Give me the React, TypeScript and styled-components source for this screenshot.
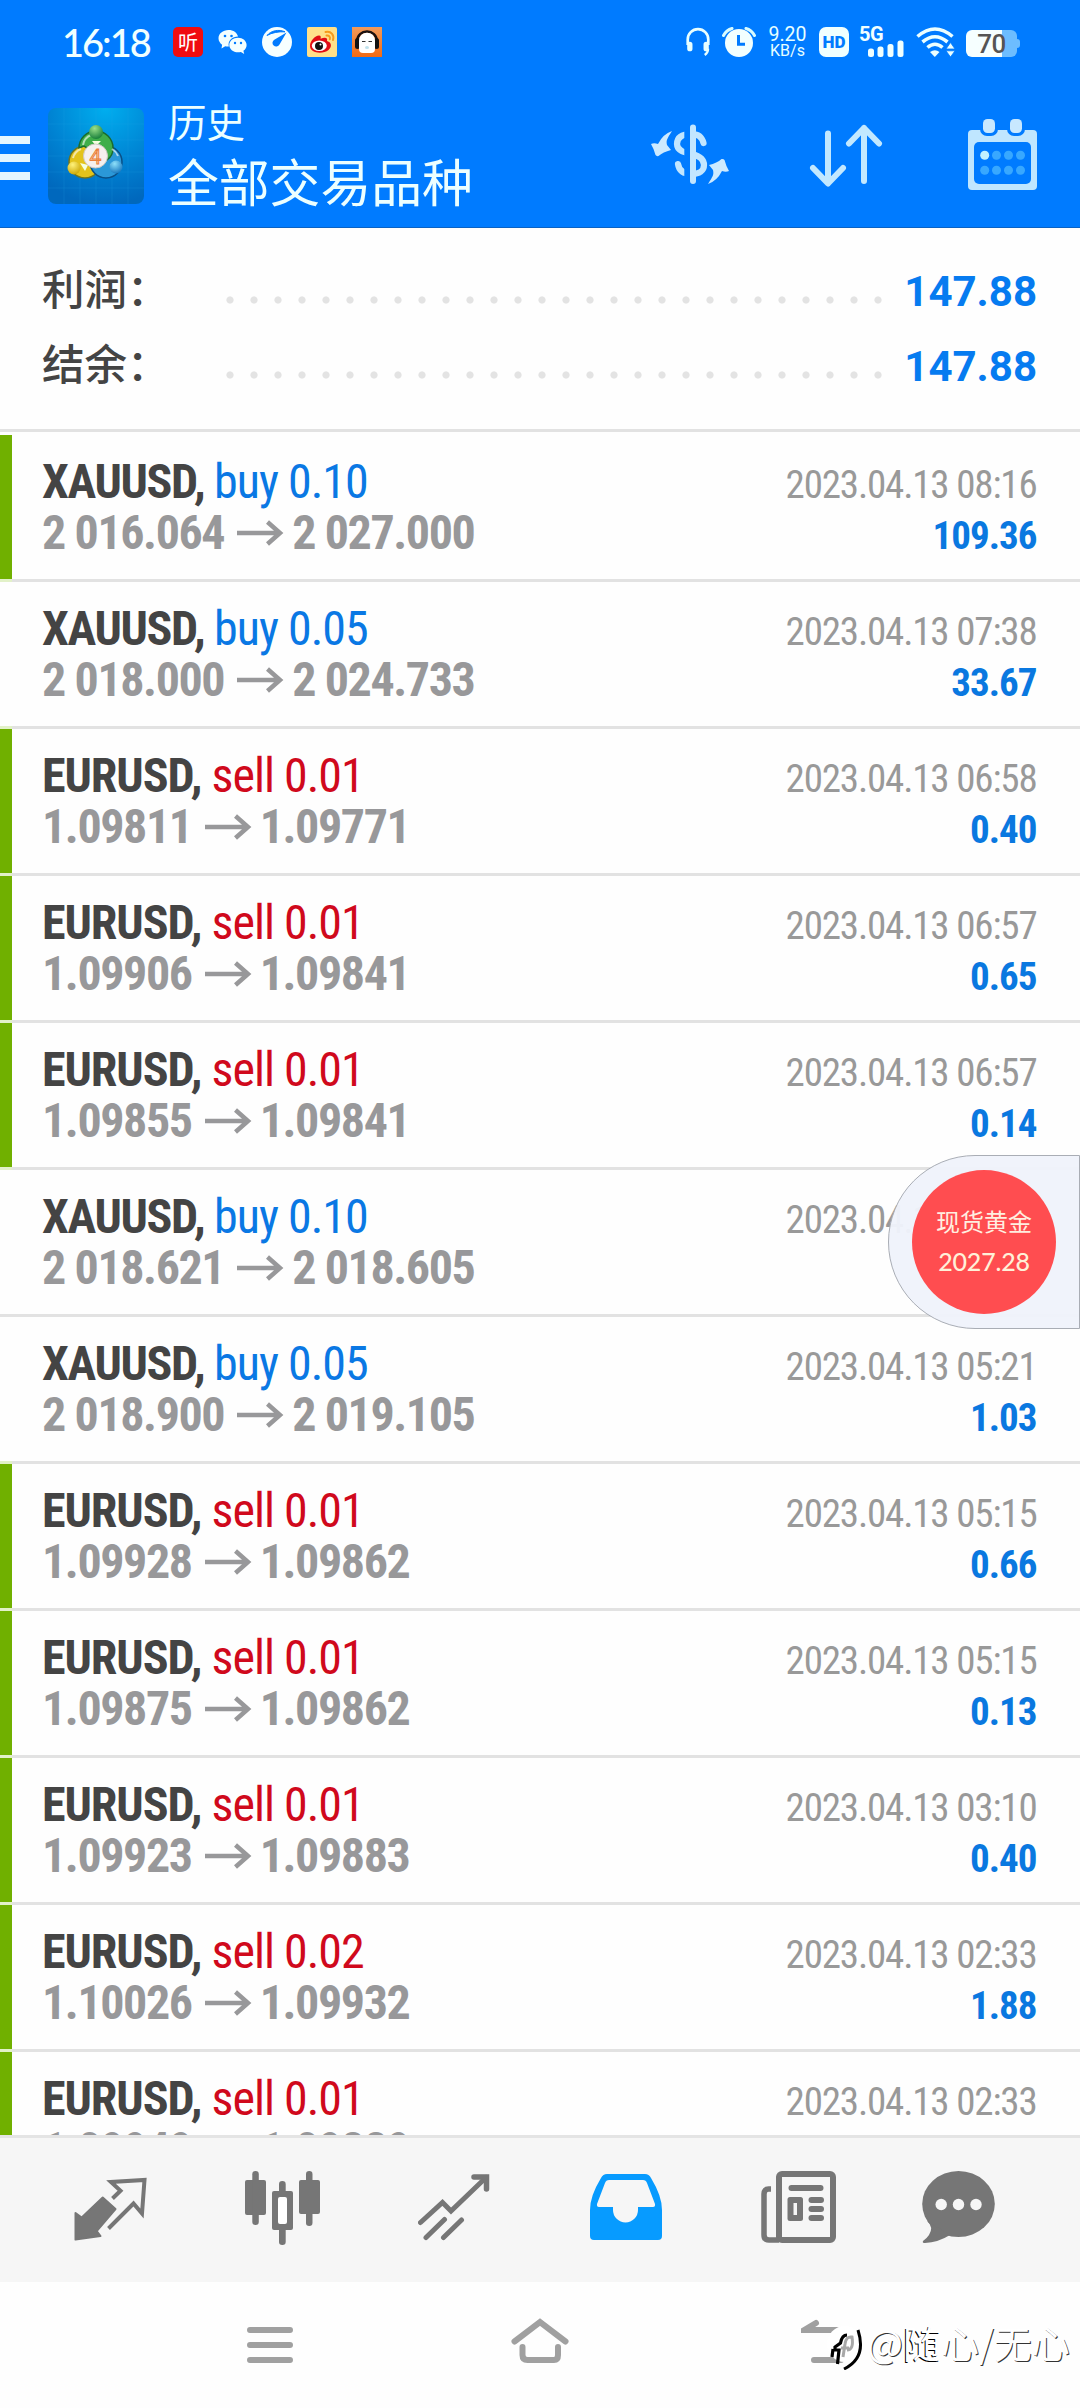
import React from "react";
import styled, { createGlobalStyle } from "styled-components";

const CONDENSED = `"Roboto Condensed", Roboto, "Liberation Sans Narrow", sans-serif`;
const CJK = `"Noto Sans CJK SC", "Noto Sans", sans-serif`;

const GlobalStyle = createGlobalStyle`
  html, body { margin: 0; padding: 0; background: #fff; }
  * { box-sizing: border-box; }
  svg { display: block; flex: none; }
`;

const Screen = styled.div`
  position: relative;
  width: 1080px;
  height: 2408px;
  display: flex;
  flex-direction: column;
  background: #fefefe;
  overflow: hidden;
`;

/* ---------- header ---------- */
const Header = styled.header`
  height: 228px;
  flex: none;
  background: #007bff;
  border-bottom: 1px solid #0a62c4;
`;

const StatusBar = styled.div`
  height: 84px;
  display: flex;
  justify-content: space-between;
  padding: 27px 63px 0 62px;
`;

const StatusGroup = styled.div<{ $gap: number }>`
  display: flex;
  align-items: flex-start;
  height: 30px;
  gap: ${(p) => p.$gap}px;
`;

const Clock = styled.div`
  width: 96px;
  font: 500 38px/31px Lato, sans-serif;
  letter-spacing: -2px;
  color: #f0ffff;
  white-space: nowrap;
`;

const ListenBadge = styled.div`
  width: 30px;
  height: 30px;
  border-radius: 5px;
  background: #f00c10;
  color: #fff;
  font: 400 20px/29px ${CJK};
  text-align: center;
`;

const NetSpeed = styled.div`
  display: flex;
  flex-direction: column;
  align-items: center;
  width: 39px;
  color: #e6ffff;
  font: 400 19.5px/15px Roboto, sans-serif;
  white-space: nowrap;
  span + span { font-size: 16px; line-height: 17px; }
`;

const HdBadge = styled.div`
  width: 30px;
  height: 30px;
  margin-right: -2px;
  border-radius: 7px;
  background: #f0ffff;
  color: #007bff;
  font: 900 17px/30px Roboto, sans-serif;
  text-align: center;
`;

const Signal = styled.div`
  position: relative;
  width: 45px;
  height: 30px;
  color: #f0ffff;
  font: 700 20px/15px Roboto, sans-serif;
  letter-spacing: -0.5px;
  svg { position: absolute; right: 0; bottom: 0; }
`;

const Battery = styled.div`
  position: relative;
  width: 51px;
  height: 27px;
  margin: 3px 0 0 -2px;
  border-radius: 6px;
  background: linear-gradient(to right, #f6ffff 36px, #6dbdff 36px);
  color: #555;
  font: 500 26px/28px Roboto, sans-serif;
  letter-spacing: -0.6px;
  text-align: center;
  &::after {
    content: "";
    position: absolute;
    right: -3px;
    top: 9px;
    width: 3px;
    height: 9px;
    border-radius: 0 3px 3px 0;
    background: #6dbdff;
  }
`;

const AppBar = styled.div`
  height: 143px;
  display: flex;
  align-items: flex-start;
`;

const Hamburger = styled.div`
  width: 30px;
  margin-top: 52px;
  display: flex;
  flex-direction: column;
  gap: 10px;
  span { height: 8px; background: #e4f6ff; }
`;

const Logo = styled.div`
  width: 96px;
  height: 96px;
  margin: 24px 0 0 18px;
  border-radius: 8px;
  overflow: hidden;
`;

const Titles = styled.div`
  flex: 1;
  margin: 11px 0 0 24px;
  color: #ecffff;
  font-family: ${CJK};
  font-weight: 400;
  white-space: nowrap;
`;
const SubTitle = styled.div`
  font-size: 38.5px;
  line-height: 50px;
`;
const MainTitle = styled.div`
  font-size: 50.8px;
  line-height: 60px;
  margin-top: 5px;
`;

const Actions = styled.div`
  display: flex;
  align-items: flex-start;
  padding: 35px 43px 0 0;
`;
const Action = styled.div<{ $top: number; $left: number }>`
  margin: ${(p) => p.$top}px 0 0 ${(p) => p.$left}px;
`;

/* ---------- summary ---------- */
const Summary = styled.section`
  height: 201px;
  flex: none;
  padding: 25px 43px 0 42px;
`;
const SummaryRow = styled.div`
  display: flex;
  height: 75px;
  align-items: center;
`;
const SummaryLabel = styled.div`
  width: 184px;
  color: #444;
  font: 500 42.5px/68px ${CJK};
  padding-bottom: 7px;
  white-space: nowrap;
`;
const Dots = styled.div`
  width: 672px;
  height: 8px;
  margin-top: 18px;
  background: radial-gradient(circle at 4px 4px, #e3e3e3 3.2px, transparent 4px) 0 0 / 24px 8px;
`;
const SummaryValue = styled.div`
  flex: 1;
  text-align: right;
  color: #067bf0;
  font: 700 42px/60px Roboto, sans-serif;
  padding-top: 2px;
`;

/* ---------- deals ---------- */
const DealList = styled.main`
  height: 1706px;
  flex: none;
  overflow: hidden;
  font-family: ${CONDENSED};
  font-stretch: 75%;
`;
const Separator = styled.div<{ $tinted?: boolean }>`
  height: 3px;
  background: linear-gradient(to right, ${(p) => (p.$tinted ? "#e2f1c8" : "#e2e2e2")} 12px, #e2e2e2 12px);
`;
const FirstGap = styled.div`
  height: 3px;
`;
const Deal = styled.div<{ $marked: boolean }>`
  height: 144px;
  padding: 21px 43.5px 0 30px;
  border-left: 12px solid ${(p) => (p.$marked ? "#70b000" : "transparent")};
`;
const DealLine = styled.div`
  display: flex;
  height: 51px;
  line-height: 51px;
  justify-content: space-between;
  align-items: baseline;
  white-space: nowrap;
`;
const Instrument = styled.div<{ $tight: boolean }>`
  font-size: 48px;
  font-weight: 700;
  color: #444;
  letter-spacing: ${(p) => (p.$tight ? -1.35 : -1.05)}px;
`;
const Side = styled.span<{ $sell: boolean }>`
  font-weight: 400;
  letter-spacing: -1px;
  color: ${(p) => (p.$sell ? "#d0091c" : "#0a78e4")};
`;
const Prices = styled.div`
  display: flex;
  align-items: baseline;
  font-size: 48px;
  font-weight: 700;
  letter-spacing: -1.4px;
  color: #98989a;
  svg { margin: 0 8px 0 13px; align-self: center; }
`;
const Time = styled.div`
  font-size: 39px;
  letter-spacing: -1.17px;
  color: #999;
`;
const Profit = styled.div`
  font-size: 39px;
  font-weight: 700;
  letter-spacing: -1px;
  color: #0a78e0;
`;

/* ---------- floating quote ---------- */
const QuoteDock = styled.aside`
  position: absolute;
  top: 1155px;
  right: 0;
  width: 192px;
  height: 174px;
  padding: 14px 23px;
  border: 1px solid #a9adb5;
  border-radius: 87px 0 0 87px;
  background: rgba(239, 243, 251, 0.96);
`;
const QuoteDisc = styled.div`
  width: 144px;
  height: 144px;
  border-radius: 50%;
  background: #ff4d50;
  display: flex;
  flex-direction: column;
  align-items: center;
  justify-content: center;
  color: #ffefe0;
  font: 400 24px/38px ${CJK};
  span + span { font: 500 25px/42px Lato, sans-serif; letter-spacing: -0.2px; color: #fff0d8; }
`;

/* ---------- bottom ---------- */
const TabBar = styled.nav`
  height: 147px;
  flex: none;
  display: grid;
  grid-template-columns: repeat(5, 172px) 1fr;
  justify-items: center;
  align-items: start;
  padding: 33px 48px 0 24px;
  background: #f6f6f6;
  border-top: 3px solid #e4e4e4;
`;
const Tab = styled.div<{ $drop: number }>`
  margin-top: ${(p) => p.$drop}px;
`;
const SystemNav = styled.nav`
  flex: 1;
  display: flex;
  align-items: flex-start;
  padding: 34px 0 0 247px;
`;
const NavItem = styled.div<{ $left: number }>`
  margin-left: ${(p) => p.$left}px;
`;
const Watermark = styled.div`
  position: absolute;
  left: 825px;
  top: 2314px;
  display: flex;
  align-items: center;
  color: #fff;
  font: 400 38px/54px ${CJK};
  text-shadow: 1px 1px 0 #333;
  white-space: nowrap;
`;
const WatermarkAccent = styled.span`
  text-shadow: -1px 1px 0 #000;
`;

type DealData = [boolean, string, string, string, string, string, string];
const deals: DealData[] = [
  [true, "XAUUSD", "buy 0.10", "2 016.064", "2 027.000", "2023.04.13 08:16", "109.36"],
  [false, "XAUUSD", "buy 0.05", "2 018.000", "2 024.733", "2023.04.13 07:38", "33.67"],
  [true, "EURUSD", "sell 0.01", "1.09811", "1.09771", "2023.04.13 06:58", "0.40"],
  [true, "EURUSD", "sell 0.01", "1.09906", "1.09841", "2023.04.13 06:57", "0.65"],
  [true, "EURUSD", "sell 0.01", "1.09855", "1.09841", "2023.04.13 06:57", "0.14"],
  [false, "XAUUSD", "buy 0.10", "2 018.621", "2 018.605", "2023.04.13 05:21", ""],
  [false, "XAUUSD", "buy 0.05", "2 018.900", "2 019.105", "2023.04.13 05:21", "1.03"],
  [true, "EURUSD", "sell 0.01", "1.09928", "1.09862", "2023.04.13 05:15", "0.66"],
  [true, "EURUSD", "sell 0.01", "1.09875", "1.09862", "2023.04.13 05:15", "0.13"],
  [true, "EURUSD", "sell 0.01", "1.09923", "1.09883", "2023.04.13 03:10", "0.40"],
  [true, "EURUSD", "sell 0.02", "1.10026", "1.09932", "2023.04.13 02:33", "1.88"],
  [true, "EURUSD", "sell 0.01", "1.09949", "1.09889", "2023.04.13 02:33", ""],
];

const WechatIcon = () => (
  <svg width="29" height="28" viewBox="0 -2 29 28">
    <path d="M10.5 1C4.8 1 .5 4.6.5 9.3c0 2.6 1.400 4.900 3.600 6.400L3.500 19.500l3.700-2.200c1 .2 2 .3 3.100.3h.5C9.500 11.500 14.500 7.600 20 7.600 19.200 3.700 15.300 1 10.500 1Z" fill="#f4ffff" />
    <path d="M20 8.700c-5 0-8.700 3.200-8.700 7.300S15 23.300 20 23.300c1 0 2-.1 2.900-.4l3.300 2-.8-3.100c2-1.400 3.200-3.400 3.200-5.800 0-4.100-3.700-7.300-8.600-7.300Z" fill="#f4ffff" />
    <g fill="#007bff"><circle cx="7" cy="7" r="1.300" /><circle cx="13.500" cy="7" r="1.300" /><circle cx="17" cy="14" r="1.200" /><circle cx="23" cy="14" r="1.200" /></g>
  </svg>
);

const GaugeIcon = () => (
  <svg width="30" height="30" viewBox="0 0 30 30">
    <circle cx="15" cy="15" r="15" fill="#f6ffff" />
    <path d="M5 8.500C9 3.500 17 2 23 4.800 17 4.500 10 5.500 5 8.500Z" fill="#007bff" stroke="#007bff" strokeWidth="1" />
    <path d="M24.500 5.500 17.500 17.500a3.700 3.700 0 1 1-5.200-4.800Z" fill="#007bff" />
  </svg>
);

const WeiboIcon = () => (
  <svg width="30" height="30" viewBox="0 0 30 30">
    <rect width="30" height="30" rx="2" fill="#ffe08a" />
    <path d="M3 19C3 14 8 8.500 12 8.500c2 0 2 1.800 1.500 3.300C18 10 21 10.500 20 14c5 1.500 5 6 1.500 9C16 27.500 3 26.500 3 19Z" fill="#e10c14" />
    <ellipse cx="12.300" cy="18.800" rx="7.500" ry="5.200" fill="#fff" />
    <circle cx="12" cy="19" r="4" fill="#111" /><circle cx="13.500" cy="17.500" r="1" fill="#fff" />
    <path d="M18.500 5C24 3.500 27.500 8 26 13M19.500 8.500c2.500-.5 4 1.500 3.300 3.700" fill="none" stroke="#f79a1c" strokeWidth="2" strokeLinecap="round" />
  </svg>
);

const PenguinIcon = () => (
  <svg width="30" height="30" viewBox="0 0 30 30">
    <defs><linearGradient id="pg" x1="0" y1="0" x2="0" y2="1"><stop offset="0" stopColor="#f09a5c" /><stop offset="1" stopColor="#f26a14" /></linearGradient></defs>
    <rect width="30" height="30" fill="url(#pg)" />
    <path d="M5 15C5 1 25 1 25 15" fill="none" stroke="#1a1010" strokeWidth="2.500" />
    <rect x="3" y="11" width="5" height="11" rx="2.500" fill="#111" /><rect x="22" y="11" width="5" height="11" rx="2.500" fill="#111" />
    <path d="M7 14C7 3 23 3 23 14v8q0 4-4 4h-8q-4 0-4-4Z" fill="#fff" />
    <path d="M10 14.500h3.500M16.500 14.500H20" stroke="#333" strokeWidth="1.200" />
    <ellipse cx="15" cy="20.500" rx="2" ry="1.600" fill="#bfe2ee" />
  </svg>
);

const HeadsetIcon = () => (
  <svg width="24" height="30" viewBox="0 0 25 30" fill="none" stroke="#e8ffff" strokeWidth="2.800">
    <path d="M1.800 18V12.300a10.700 10.700 0 0 1 21.400 0V18" />
    <path d="M4 17.500v4.500M21 17.500v4.500" strokeWidth="5.500" strokeLinecap="round" />
    <path d="M23 22q0 4-3.500 6.500" strokeWidth="2.400" />
  </svg>
);

const AlarmIcon = () => (
  <svg width="34" height="30" viewBox="0 0 34 30">
    <circle cx="17" cy="16" r="14" fill="#f2ffff" />
    <path d="M1.500 8.500Q4.500 3 10 1.500M32.500 8.500Q29.500 3 24 1.500" fill="none" stroke="#d8fbff" strokeWidth="3" strokeLinecap="round" />
    <path d="M16.500 8v9.300H23" fill="none" stroke="#007bff" strokeWidth="3" />
  </svg>
);

const WifiIcon = () => (
  <svg width="40" height="30" viewBox="0 0 40 30">
    <g fill="none" stroke="#ecffff" strokeWidth="3.600">
      <path d="M1.500 9.500Q19 -5.500 36.500 9.500" /><path d="M6.500 15Q19 4.500 31.500 15" /><path d="M11.500 20.500Q19 14 26.500 20.500" />
    </g>
    <path d="M14 25q5-3.500 9.500 0L18.800 30Z" fill="#ecffff" />
    <path d="M30 22l4.500-6.500L39 22ZM30 23.800h9L34.500 30Z" fill="#ecffff" stroke="#007bff" strokeWidth=".8" />
  </svg>
);

const MetaLogo = () => (
  <svg width="96" height="96" viewBox="0 0 96 96">
    <defs>
      <radialGradient id="bg" cx=".6" cy="0" r="1"><stop offset="0" stopColor="#00aeef" /><stop offset=".6" stopColor="#0082d2" /><stop offset="1" stopColor="#0068bd" /></radialGradient>
      <radialGradient id="gr" cx=".4" cy=".25" r=".8"><stop offset="0" stopColor="#9be08a" /><stop offset="1" stopColor="#117a36" /></radialGradient>
      <radialGradient id="ye" cx=".4" cy=".25" r=".8"><stop offset="0" stopColor="#fff27a" /><stop offset="1" stopColor="#c9a400" /></radialGradient>
      <radialGradient id="bl" cx=".4" cy=".25" r=".8"><stop offset="0" stopColor="#8ee0fa" /><stop offset="1" stopColor="#1173bd" /></radialGradient>
    </defs>
    <rect width="96" height="96" fill="url(#bg)" />
    <path d="M16 0V96M32 0V96M48 0V96M64 0V96M80 0V96M0 16H96M0 32H96M0 48H96M0 64H96M0 80H96" stroke="#20a8e8" strokeOpacity=".18" />
    <circle cx="37" cy="54" r="16" fill="#e3c31b" stroke="#6d7420" strokeWidth="1.500" />
    <circle cx="58" cy="54" r="16" fill="#2b98d8" stroke="#0a4f86" strokeWidth="1.500" />
    <path d="M31 40a17 17 0 0 1 34 0q0 8-6 12L36 38Z" fill="#3fae4a" stroke="#1a6b30" strokeWidth="1.500" />
    <path d="M35 37a13 13 0 0 1 8-10M25 50a13 13 0 0 1 8-9M70 48a14 14 0 0 0-6-7" fill="none" stroke="#fff" strokeOpacity=".6" strokeWidth="2" />
    <path d="M44 33l4 5 5-5ZM32 55l8 2-3 6ZM62 56l5-1-2 6Z" fill="#f4ffe0" />
    <circle cx="48" cy="24" r="7" fill="url(#gr)" /><circle cx="26" cy="60" r="6.500" fill="url(#ye)" /><circle cx="68" cy="59" r="6.500" fill="url(#bl)" />
    <circle cx="47.500" cy="48" r="12" fill="#f6f0ee" stroke="#cfc9c4" />
    <text x="47.500" y="55.500" textAnchor="middle" fontFamily="Roboto, sans-serif" fontSize="21" fill="#f9c79c" stroke="#ea7f3c" strokeWidth=".9">4</text>
  </svg>
);

const RATE_ARROW = "M22 8C17 16 16 17 17 22L21 27Q13 29 8.500 33Q6.500 33.500 5.500 32Q4 26 1 21Q4 19.500 8 21Q13 11 22 8Z";
const CurrencyIcon = () => (
  <svg width="80" height="62" viewBox="0 0 80 62">
    <path d="M53.500 20C52 14 48 11 42 11C33 11 27 14 27 21C27 28 35 29.500 42 31C50 33 54 36 54 42C54 48 49 51 42 51C34 51 29 48 28 41" fill="none" stroke="#c2e6ff" strokeWidth="6.200" strokeLinecap="round" />
    <path d="M34.300 3h5.700v56h-5.700Z" fill="#007bff" />
    <path d="M43 4.500V58" stroke="#c2e6ff" strokeWidth="6" strokeLinecap="round" />
    <path d={RATE_ARROW} fill="#cdeaff" />
    <path d={RATE_ARROW} fill="#cdeaff" transform="rotate(180 40 34.500)" />
  </svg>
);

const SortIcon = () => (
  <svg width="74" height="64" viewBox="0 0 74 64" fill="none" stroke="#c2e8ff" strokeWidth="6" strokeLinecap="round" strokeLinejoin="round">
    <path d="M19 9.500V58M4 44l15 15.500L34 44M55 4V57M40 19.500L55 4l15 15.500" />
  </svg>
);

const CalendarIcon = () => (
  <svg width="69" height="71" viewBox="0 0 69 71">
    <rect y="11" width="69" height="60" rx="4" fill="#bfe6ff" />
    <rect x="6" y="23" width="57" height="42" rx="5" fill="#007bff" />
    <rect x="12" y="-3" width="18" height="20" rx="7" fill="#007bff" /><rect x="39" y="-3" width="18" height="20" rx="7" fill="#007bff" />
    <rect x="15" width="12" height="14" rx="4.500" fill="#c8e8ff" /><rect x="42" width="12" height="14" rx="4.500" fill="#c8e8ff" />
    {[36.300, 51.300].map((y, r) => [16.700, 28.500, 40.500, 52.500].map((x, c) => (
      <circle key={x + y} cx={x} cy={y} r="4.500" fill={r === 0 && c === 0 ? "#c0f0ff" : "#38a8ff"} />
    )))}
  </svg>
);

const PriceArrow = () => (
  <svg width="47" height="26" viewBox="0 0 47 26" fill="none" stroke="#98989a" strokeWidth="4.500">
    <path d="M0 13H43M30.500 2L43 13L30.500 24" />
  </svg>
);

const tabIcons = [
  <svg width="73" height="66" viewBox="0 0 73 66">
    <path d="M1.500 36L7.700 40.500L28.700 20.500L41.500 32L22.700 54L26.500 59L1.500 62.500Z" fill="#767676" stroke="#767676" strokeWidth="2" strokeLinejoin="round" />
    <path d="M38.500 21.500L46.500 13.700L37 5L70.500 3L68 36.500L59.500 26.500L34.500 51.500" fill="none" stroke="#767676" strokeWidth="4" />
  </svg>,
  <svg width="75" height="74" viewBox="0 0 75 74" fill="#767676">
    <rect y="9" width="21" height="35" rx="2" /><rect x="7.300" width="6.500" height="54" rx="3.200" />
    <rect x="54" y="9" width="21" height="34" rx="2" /><rect x="61" width="6.500" height="55" rx="3.200" />
    <rect x="34" y="10" width="6.700" height="64" rx="3.200" /><rect x="27" y="20" width="21" height="39" rx="2" /><rect x="33" y="26" width="9" height="27" rx="2" fill="#fff" />
  </svg>,
  <svg width="72" height="67" viewBox="0 0 72 67" fill="none" stroke="#767676" strokeWidth="5">
    <path d="M2.500 48.500L24.500 28.500L33 37L68 3.500" strokeLinecap="round" /><path d="M56 3h12.500V15" strokeWidth="5.500" strokeLinecap="round" />
    <path d="M26.500 45.500L8 63.500M43.500 46L25.500 63.500" strokeLinecap="round" />
  </svg>,
  <svg width="72" height="66" viewBox="0 0 72 66">
    <path fillRule="evenodd" fill="#079bff" d="M17 0H55Q59 0 61 4Q72 22 72 36V62Q72 66 68 66H4Q0 66 0 62V36Q0 22 11 4Q13 0 17 0ZM19 6Q16 6 15 9L7 30Q6.500 33 9 33H23V36A12.500 12.500 0 0 0 48 36V33H63Q65.500 33 65 30L57 9Q56 6 53 6Z" />
  </svg>,
  <svg width="75" height="72" viewBox="0 0 75 72" fill="#767676">
    <rect x="18" y="3" width="54" height="66" rx="3" fill="none" stroke="#767676" strokeWidth="6" />
    <path d="M10 18H7.500Q3 18 3 23V64Q3 69 8 69H18" fill="none" stroke="#767676" strokeWidth="5.500" />
    <rect x="27.500" y="14" width="35" height="6" rx="3" /><rect x="26.500" y="26" width="15.500" height="24" rx="2.500" /><rect x="32.500" y="32" width="3.500" height="12" fill="#f6f6f6" />
    <rect x="47.500" y="26" width="15.500" height="6" rx="3" /><rect x="47.500" y="35" width="15.500" height="6" rx="3" /><rect x="47.500" y="44" width="15.500" height="6" rx="3" />
  </svg>,
  <svg width="73" height="72" viewBox="0 0 73 72" fill="#767676">
    <ellipse cx="36.500" cy="33" rx="36.300" ry="33" />
    <path d="M5 50Q12 56 7 64Q5 67 1 70Q0 72 3 72Q16 71.500 28 64Z" />
    <g fill="#f6f6f6"><circle cx="19.200" cy="33.500" r="5.700" /><circle cx="36.500" cy="33.500" r="5.700" /><circle cx="54" cy="33.500" r="5.700" /></g>
  </svg>,
];
const tabDrops = [6, 0, 3, 3, 0, 0];

const sysStroke = { fill: "none", stroke: "#a0a0a0", strokeWidth: 6, strokeLinecap: "round" as const };

export default function App() {
  return (
    <Screen>
      <GlobalStyle />
      <Header>
        <StatusBar>
          <StatusGroup $gap={15}>
            <Clock>16:18</Clock>
            <ListenBadge>听</ListenBadge>
            <WechatIcon />
            <GaugeIcon />
            <WeiboIcon />
            <PenguinIcon />
          </StatusGroup>
          <StatusGroup $gap={12}>
            <HeadsetIcon />
            <AlarmIcon />
            <NetSpeed><span>9.20</span><span>KB/s</span></NetSpeed>
            <HdBadge>HD</HdBadge>
            <Signal>
              5G
              <svg width="36" height="17" viewBox="0 0 36 17" fill="#f0ffff">
                <rect y="8.500" width="6" height="8.500" rx="2.500" /><rect x="9.500" y="6.500" width="6" height="10.500" rx="2.500" />
                <rect x="19.500" y="4" width="6" height="13" rx="2.500" /><rect x="29.500" y="0.500" width="6" height="16.500" rx="2.500" />
              </svg>
            </Signal>
            <WifiIcon />
            <Battery>70</Battery>
          </StatusGroup>
        </StatusBar>
        <AppBar>
          <Hamburger><span /><span /><span /></Hamburger>
          <Logo><MetaLogo /></Logo>
          <Titles>
            <SubTitle>历史</SubTitle>
            <MainTitle>全部交易品种</MainTitle>
          </Titles>
          <Actions>
            <Action $top={4} $left={0}><CurrencyIcon /></Action>
            <Action $top={5} $left={79}><SortIcon /></Action>
            <Action $top={0} $left={85}><CalendarIcon /></Action>
          </Actions>
        </AppBar>
      </Header>

      <Summary>
        {["利润：", "结余："].map((label) => (
          <SummaryRow key={label}>
            <SummaryLabel>{label}</SummaryLabel>
            <Dots />
            <SummaryValue>147.88</SummaryValue>
          </SummaryRow>
        ))}
      </Summary>

      <DealList>
        <Separator />
        <FirstGap />
        {deals.map(([marked, symbol, side, open, close, time, profit], i) => (
          <React.Fragment key={i}>
            <Deal $marked={marked}>
              <DealLine>
                <Instrument $tight={symbol === "XAUUSD"}>{symbol}, <Side $sell={side.startsWith("sell")}>{side}</Side></Instrument>
                <Time>{time}</Time>
              </DealLine>
              <DealLine>
                <Prices>{open}<PriceArrow />{close}</Prices>
                <Profit>{profit}</Profit>
              </DealLine>
            </Deal>
            <Separator $tinted={marked || (deals[i + 1] && deals[i + 1][0])} />
          </React.Fragment>
        ))}
      </DealList>

      <TabBar>
        {tabIcons.map((icon, i) => (
          <Tab key={i} $drop={tabDrops[i]}>{icon}</Tab>
        ))}
      </TabBar>

      <SystemNav>
        <NavItem $left={0}>
          <svg width="46" height="52" viewBox="0 0 46 52" {...sysStroke}><path d="M3 14H43M3 29H43M3 44H43" /></svg>
        </NavItem>
        <NavItem $left={218}>
          <svg width="58" height="52" viewBox="0 0 58 52" {...sysStroke}><path d="M3.500 25.500L29 6L54.500 25.500M11.500 31V39Q11.500 44 16.500 44H43Q47 44 47 39V31" /></svg>
        </NavItem>
        <NavItem $left={232}>
          <svg width="56" height="52" viewBox="0 0 56 52" {...sysStroke}><path d="M15 7L3.500 14H40M13 44H40" /></svg>
        </NavItem>
      </SystemNav>

      <QuoteDock>
        <QuoteDisc><span>现货黄金</span><span>2027.28</span></QuoteDisc>
      </QuoteDock>

      <Watermark>
        <svg width="42" height="56" viewBox="0 0 42 56">
          <circle cx="20" cy="30" r="18" fill="#fff" />
          <path d="M22 36Q29 36 27 23Q21 22 20 30L18 43M16 34H24" fill="none" stroke="#a8a8a8" strokeWidth="3" />
          <path d="M22 21Q17 21 15.500 29L10 33V36H14L12.500 50M8 35L7 43" fill="none" stroke="#000" strokeWidth="3.200" />
          <path d="M33 16Q42 44 19 55" fill="none" stroke="#000" strokeWidth="3" />
        </svg>
        @<WatermarkAccent>随</WatermarkAccent>心/无心
      </Watermark>
    </Screen>
  );
}
